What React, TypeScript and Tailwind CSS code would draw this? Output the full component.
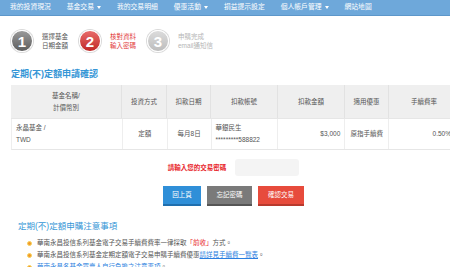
import React from "react";

const font = { fontFamily: '"Liberation Sans", "Noto Sans CJK TC", sans-serif' };

const navItems = [
  { label: "我的投資現況" },
  { label: "基金交易", caret: true },
  { label: "我的交易明細" },
  { label: "優惠活動", caret: true },
  { label: "損益提示設定" },
  { label: "個人帳戶管理", caret: true },
  { label: "網站地圖" },
];

const Caret = () => (
  <span className="ml-[3px] inline-block w-0 h-0 border-l-[2.5px] border-r-[2.5px] border-t-[3px] border-l-transparent border-r-transparent border-t-white align-middle" />
);

const Step = ({
  num,
  lines,
  circle,
  text,
}: {
  num: string;
  lines: string[];
  circle: string;
  text: string;
}) => (
  <div className="flex items-center">
    <div
      className={`w-[22px] h-[22px] rounded-full flex items-center justify-center border border-white shadow-[0_0_0_1px_rgba(0,0,0,0.15)] ${circle}`}
    >
      <span className="text-white font-bold text-[15px] leading-none">{num}</span>
    </div>
    <div className={`ml-[9px] text-[6.5px] leading-[9px] ${text}`}>
      {lines.map((l) => (
        <div key={l}>{l}</div>
      ))}
    </div>
  </div>
);

export default function App() {
  return (
    <div className="w-[450px] h-[267px] overflow-hidden bg-white text-[#555]" style={font}>
      {/* NAV */}
      <div className="h-[16px] bg-[#6ea8da] border-b border-[#5d97ca] flex items-center pl-[10px] gap-[16px] text-white text-[6.8px]">
        {navItems.map((n) => (
          <div key={n.label} className="flex items-center whitespace-nowrap">
            {n.label}
            {n.caret && <Caret />}
          </div>
        ))}
      </div>

      {/* STEPS */}
      <div className="flex items-center pl-[11px] mt-[14px] gap-[11px]">
        <Step
          num="1"
          lines={["選擇基金", "日期金額"]}
          circle="bg-gradient-to-b from-[#9a9a9a] to-[#5e5e5e]"
          text="text-[#555]"
        />
        <Step
          num="2"
          lines={["核對資料", "輸入密碼"]}
          circle="bg-gradient-to-b from-[#e86a6a] to-[#c02525]"
          text="text-[#e23b3b]"
        />
        <Step
          num="3"
          lines={["申購完成", "email通知信"]}
          circle="bg-gradient-to-b from-[#dcdcdc] to-[#bdbdbd]"
          text="text-[#b5b5b5]"
        />
      </div>

      {/* TITLE */}
      <div className="pl-[11px] mt-[16px] text-[9px] font-bold text-[#3596d6] leading-[12px]">
        定期(不)定額申請確認
      </div>

      {/* TABLE */}
      <div className="ml-[11px] mt-[5px] w-[448px] text-[6.5px] text-[#555]">
        <div className="flex bg-[#efefef] h-[34px] border-b border-[#e6e6e6]">
          <div className="w-[111px] flex flex-col items-center justify-center leading-[12px] border-r border-[#e2e2e2]">
            <div>基金名稱/</div>
            <div>計價幣別</div>
          </div>
          <div className="w-[45px] flex items-center justify-center border-r border-[#e2e2e2]">投資方式</div>
          <div className="w-[44px] flex items-center justify-center border-r border-[#e2e2e2]">扣款日期</div>
          <div className="w-[67px] flex items-center justify-center border-r border-[#e2e2e2]">扣款帳號</div>
          <div className="w-[67px] flex items-center justify-center border-r border-[#e2e2e2]">扣款金額</div>
          <div className="w-[44px] flex items-center justify-center border-r border-[#e2e2e2]">適用優惠</div>
          <div className="w-[70px] flex items-center justify-center">手續費率</div>
        </div>
        <div className="flex h-[31px] border-b border-[#e6e6e6] border-l border-l-[#eee]">
          <div className="w-[111px] flex flex-col justify-center pl-[4px] leading-[12px] border-r border-[#eee]">
            <div>永晶基金 /</div>
            <div>TWD</div>
          </div>
          <div className="w-[45px] flex items-center justify-center border-r border-[#eee]">定額</div>
          <div className="w-[44px] flex items-center justify-center border-r border-[#eee]">每月8日</div>
          <div className="w-[67px] flex flex-col justify-center pl-[4px] leading-[12px] border-r border-[#eee]">
            <div>華銀民生</div>
            <div>*********588822</div>
          </div>
          <div className="w-[67px] flex items-center justify-end pr-[4px] border-r border-[#eee]">$3,000</div>
          <div className="w-[44px] flex items-center justify-center border-r border-[#eee]">原指手續費</div>
          <div className="w-[70px] flex items-center justify-end pr-[8px]">0.50%</div>
        </div>
      </div>

      {/* PASSWORD */}
      <div className="flex items-center justify-center mt-[9px] pl-[17px] gap-[9px]">
        <span className="text-[6.5px] text-[#e8262b] font-bold">請輸入您的交易密碼</span>
        <input className="w-[64px] h-[17px] rounded-[3px] bg-[#f4f4f4] outline-none" type="password" />
      </div>

      {/* BUTTONS */}
      <div className="flex justify-center gap-[6px] mt-[10px] pl-[17px] text-white text-[6.5px]">
        <button className="w-[38px] h-[20px] bg-[#2f8fd8] border-b-2 border-[#1f6fae]">回上頁</button>
        <button className="w-[45px] h-[20px] bg-[#7a7a7a] border-b-2 border-[#555]">忘記密碼</button>
        <button className="w-[46px] h-[20px] bg-[#e74b3c] border-b-2 border-[#b8392d]">確認交易</button>
      </div>

      {/* NOTES */}
      <div className="pl-[18px] mt-[14px] text-[8.5px] text-[#3596d6] leading-[12px]">
        定期(不)定額申購注意事項
      </div>
      <ul className="pl-[27px] mt-[5px] text-[6.5px] text-[#555] leading-[12px]">
        <li className="flex items-center">
          <span className="w-[5px] h-[5px] rounded-full bg-[#f39a2b] border border-[#f7d35c] mr-[5px]" />
          華南永昌投信系列基金電子交易手續費費率一律採取
          <span className="text-[#e8262b]">「前收」</span>方式。
        </li>
        <li className="flex items-center">
          <span className="w-[5px] h-[5px] rounded-full bg-[#f39a2b] border border-[#f7d35c] mr-[5px]" />
          華南永昌投信系列基金定期定額電子交易申購手續費優惠
          <span className="text-[#2b7fe0] underline">請詳見手續費一覽表</span>。
        </li>
        <li className="flex items-center">
          <span className="w-[5px] h-[5px] rounded-full bg-[#f39a2b] border border-[#f7d35c] mr-[5px]" />
          <span className="text-[#2b7fe0]">華南永昌各基金買賣人自行負擔之注意事項</span>。
        </li>
      </ul>
    </div>
  );
}
